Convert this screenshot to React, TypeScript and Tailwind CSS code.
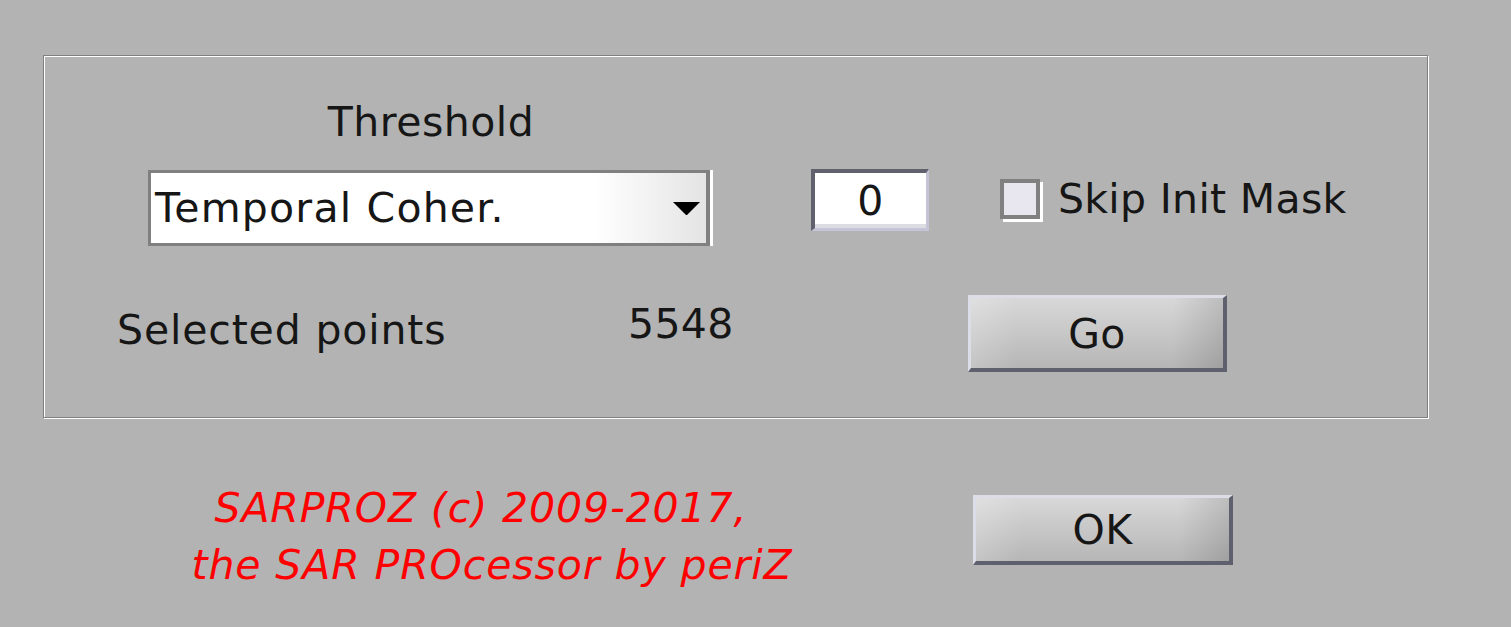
export default function App() {
  return (
    <div className="w-[1511px] h-[627px] overflow-hidden bg-[#b3b3b3] pt-[55px] pl-[43px] font-['DejaVu_Sans',sans-serif] text-[41px] leading-[48px] text-[#161616] tracking-[0.3px]">
      {/* threshold panel */}
      <div className="w-[1385px] h-[363px] border border-[#808080] shadow-[inset_1px_1px_0_#fff,1px_1px_0_#fff]">
        <div className="flex items-start pt-[42px]">
          <div className="ml-[104px] w-[562px] flex flex-col">
            <div className="h-[48px] text-center tracking-[0.5px] pl-[4px]">Threshold</div>
            <div className="mt-[24px] h-[76px] flex items-center border-[3px] border-r-[4px] border-[#808080] shadow-[3px_0_0_#fff] bg-[linear-gradient(to_right,#ffffff_0%,#ffffff_80%,#e4e4e4_100%)] pl-[4px] pr-[6px]">
              <span className="flex-1 whitespace-nowrap tracking-[1.2px]">Temporal Coher.</span>
              <svg width="27" height="13" viewBox="0 0 27 13" className="shrink-0">
                <polygon points="0,0 27,0 14,13 13,13" fill="#000" />
              </svg>
            </div>
          </div>
          <div className="ml-[101px] mt-[71px] w-[118px] h-[62px] border-[4px] border-t-[#60616c] border-l-[#60616c] border-r-[3px] border-b-[3px] border-r-[#c4c4d6] border-b-[#c4c4d6] bg-[linear-gradient(to_bottom,#ffffff_0%,#ffffff_92%,#dcdce2_92%)] flex items-center justify-center">
            0
          </div>
          <label className="ml-[71px] mt-[77px] h-[48px] flex items-center">
            <span className="w-[40px] h-[40px] border-[4px] border-[#808080] bg-[#e8e6ee] shadow-[3px_3px_0_#fff]" />
            <span className="ml-[18px] whitespace-nowrap">Skip Init Mask</span>
          </label>
        </div>
        <div className="flex items-start mt-[49px]">
          <div className="ml-[73px] w-[511px] mt-[11px] whitespace-nowrap tracking-[0.85px]">Selected points</div>
          <div className="w-[340px] mt-[5px]">5548</div>
          <button className="w-[259px] h-[77px] border-[3px] border-r-[4px] border-b-[4px] border-t-[#dcdde6] border-l-[#dcdde6] border-r-[#5e606e] border-b-[#5e606e] bg-[linear-gradient(to_right,rgba(255,255,255,0.2),rgba(255,255,255,0)_18%,rgba(0,0,0,0)_80%,rgba(0,0,0,0.12)),linear-gradient(to_bottom,#d8d8d8,#b6b6b6)] flex items-center justify-center pt-[2px]">
            Go
          </button>
        </div>
      </div>

      {/* footer */}
      <div className="flex items-start mt-[62px]">
        <div className="ml-[59px] w-[780px] text-center italic text-[#ff0000] leading-[57px] tracking-[0.9px]">
          <div className="pr-[22px]">SARPROZ (c) 2009-2017,</div>
          <div>the SAR PROcessor by periZ</div>
        </div>
        <button className="ml-[91px] mt-[15px] w-[260px] h-[70px] border-[3px] border-r-[4px] border-b-[4px] border-t-[#dcdde6] border-l-[#dcdde6] border-r-[#5e606e] border-b-[#5e606e] bg-[linear-gradient(to_right,rgba(255,255,255,0.2),rgba(255,255,255,0)_18%,rgba(0,0,0,0)_80%,rgba(0,0,0,0.12)),linear-gradient(to_bottom,#d8d8d8,#b6b6b6)] flex items-center justify-center">
          OK
        </button>
      </div>
    </div>
  );
}
